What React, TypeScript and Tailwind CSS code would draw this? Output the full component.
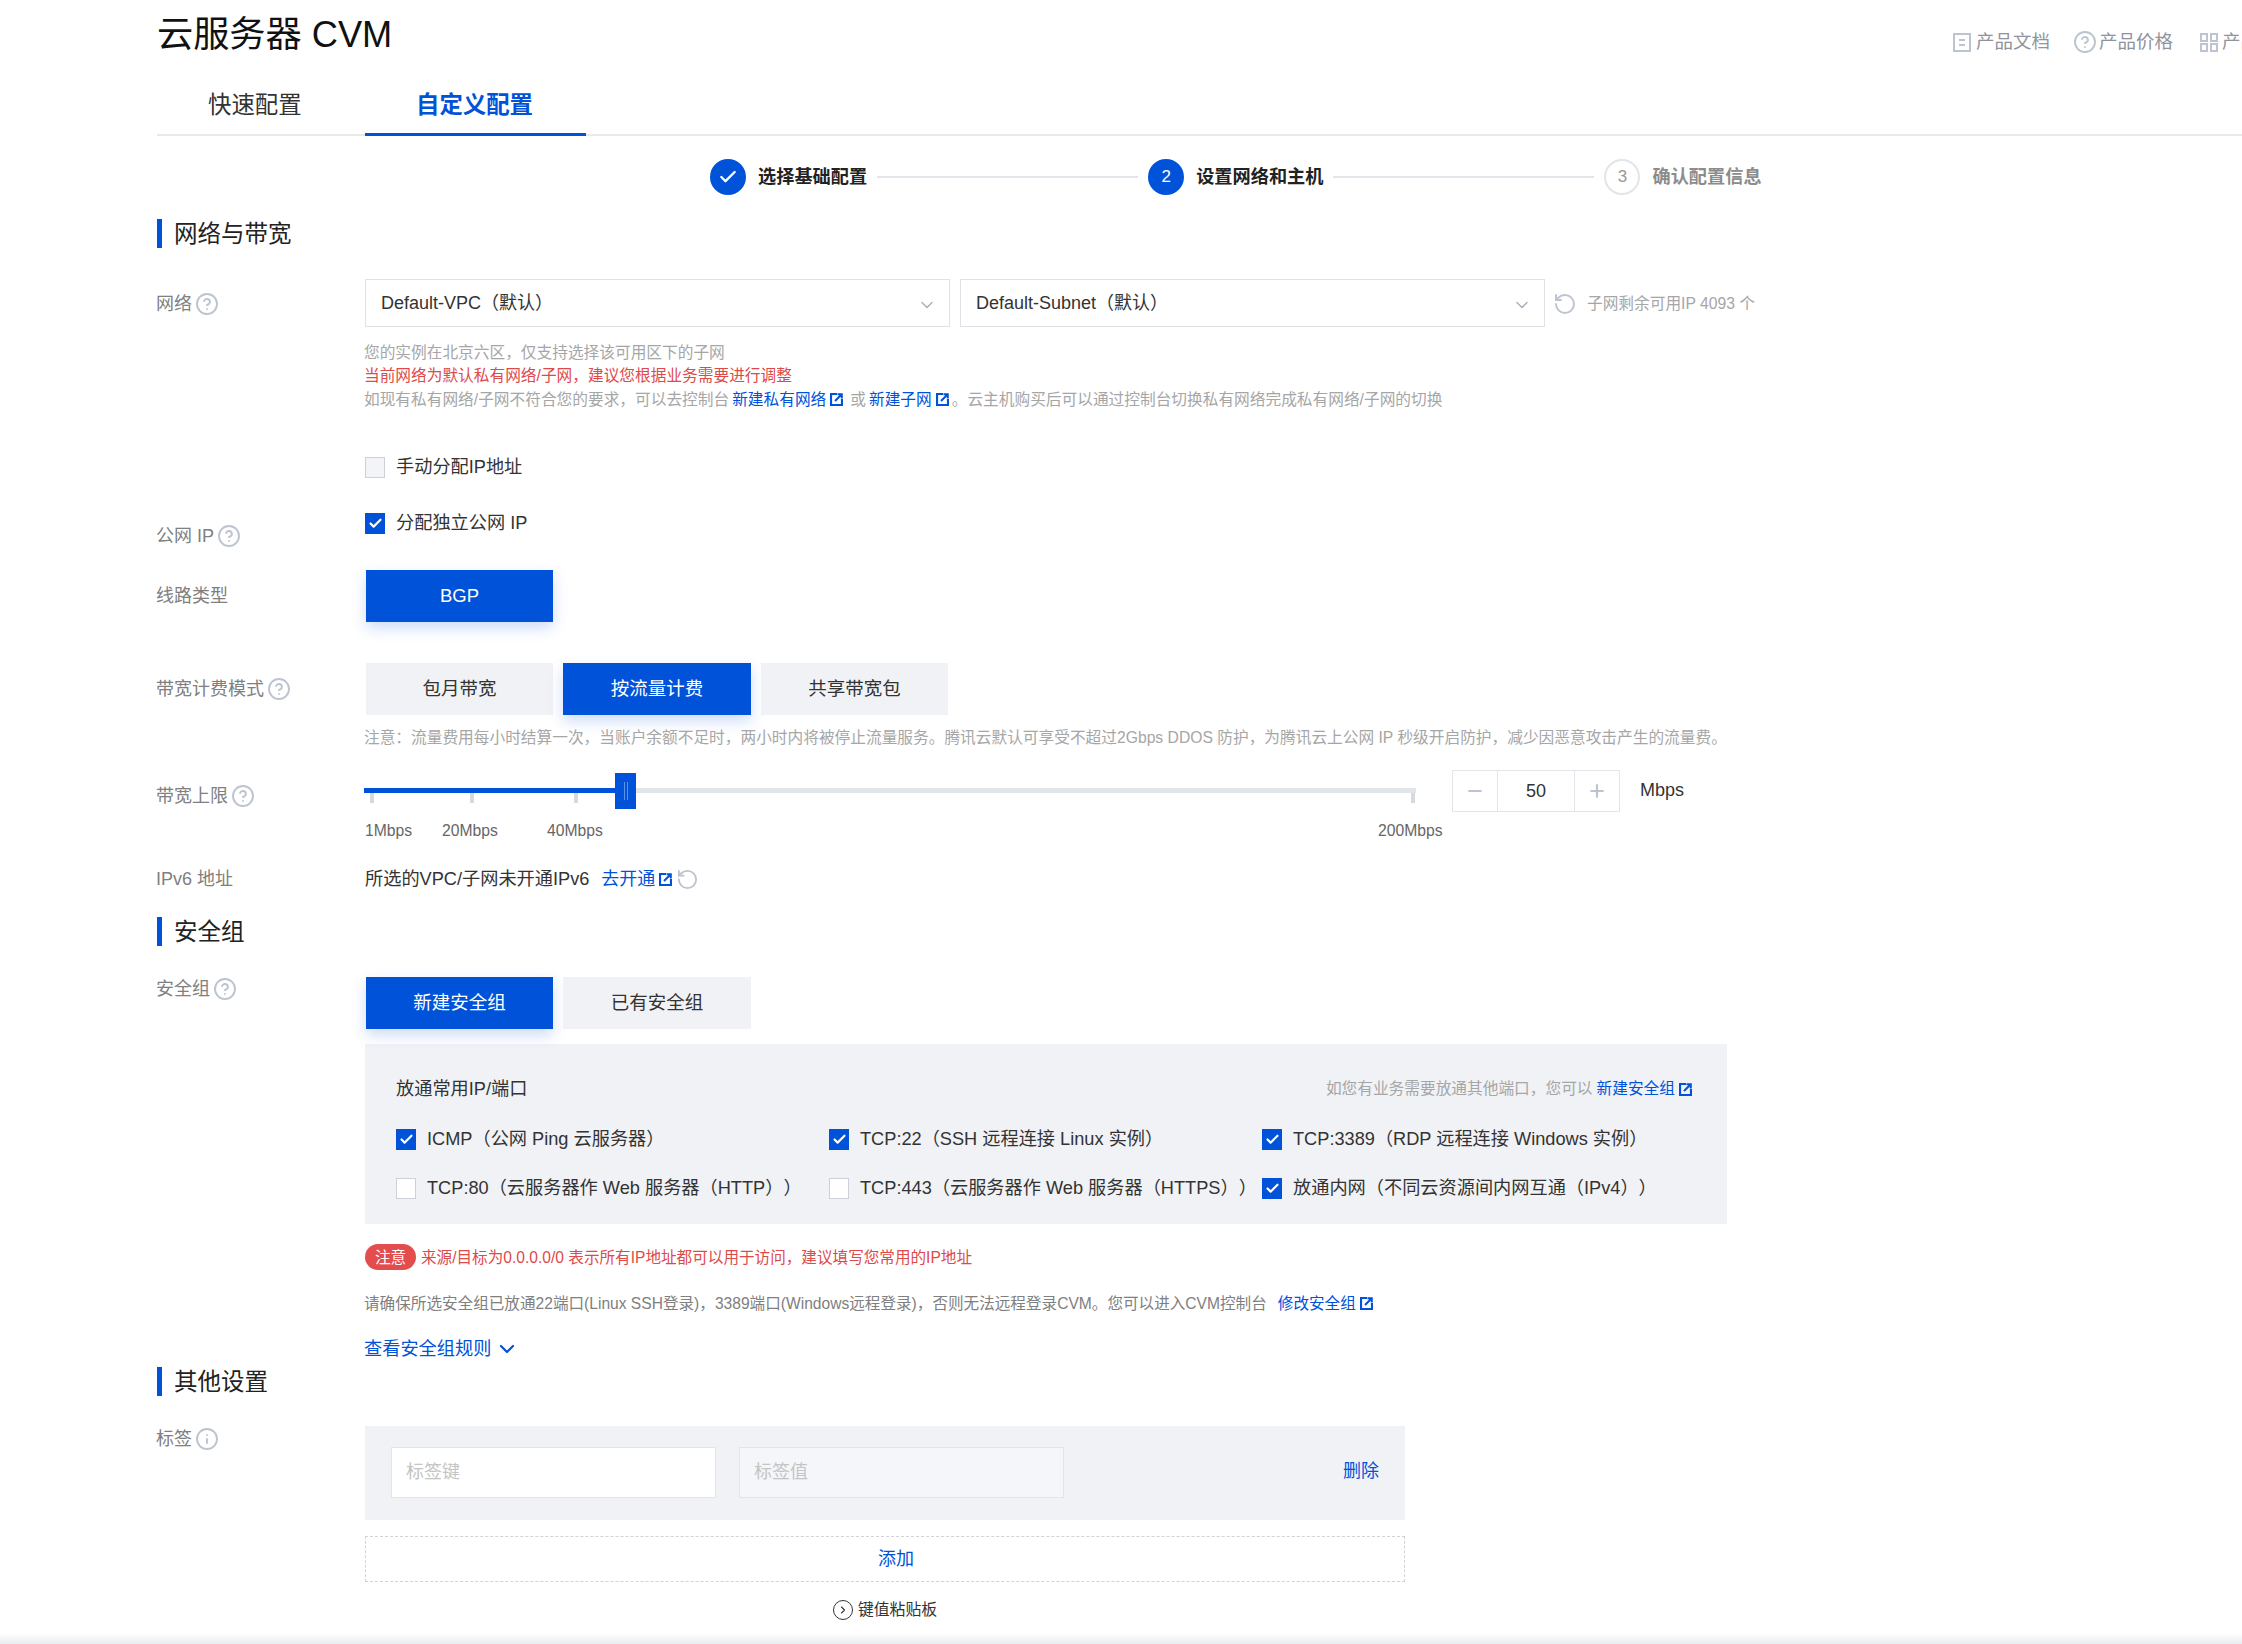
import React from "react";
import { Check, ChevronDown, ChevronRight, CircleHelp, Info, Minus, Plus, RotateCcw } from "lucide-react";

const Help = () => <CircleHelp size={24} strokeWidth={1.9} className="-my-[2px] text-[#bcc4d0] shrink-0" />;

const Ext = () => (
  <svg width="13" height="13" viewBox="0 0 13 13" className="inline-block shrink-0 ml-[4px]" fill="none">
    <path d="M7 1H1v11h11V6" stroke="#0052d9" strokeWidth="2.2" />
    <path d="M5 8l6-6M7.5 1.2h4.3v4.3" stroke="#0052d9" strokeWidth="2" />
  </svg>
);

const Heading = ({ children, className }: any) => (
  <div className={"h-[29px] border-l-[5px] border-[#0052d9] pl-[12px] pt-[2px] flex items-center text-[23.5px] text-[#222] " + className}>
    {children}
  </div>
);

const Label = ({ children, className }: any) => (
  <div className={"w-[209px] -ml-px shrink-0 flex items-center gap-[3px] text-[18px] leading-[20px] text-[#808080] " + className}>
    {children}
  </div>
);

const Checkbox = ({ on, white }: any) =>
  on ? (
    <span className="w-[20px] h-[21px] shrink-0 bg-[#0052d9] flex items-center justify-center">
      <Check size={15} strokeWidth={3.4} className="text-white" />
    </span>
  ) : (
    <span className={"w-[20px] h-[21px] shrink-0 border border-[#ccd1d9] " + (white ? "bg-white" : "bg-[#f2f4f8]")} />
  );

const Option = ({ on, children, className }: any) => (
  <button
    className={
      "h-[52px] flex items-center justify-center text-[18.5px] " +
      (on ? "bg-[#0052d9] text-white shadow-[0_6px_14px_rgba(0,82,217,0.2)] " : "bg-[#f1f2f5] text-[#333] ") +
      (className || "w-[187px]")
    }
  >
    {children}
  </button>
);

const Select = ({ text, width }: any) => (
  <div className={"h-[48px] border border-[#dfe2e6] flex items-center justify-between pl-[15px] pr-[12px] text-[18px] text-[#333] " + width}>
    <span>{text}</span>
    <ChevronDown size={20} strokeWidth={1.6} className="text-[#a5adba] mt-[3px]" />
  </div>
);

const Step = ({ mark, text, tone }: any) => (
  <div className="flex items-center gap-[12px]">
    {mark}
    <span className={"pt-[2px] text-[18.2px] font-semibold whitespace-nowrap " + tone}>{text}</span>
  </div>
);

const Port = ({ on, children }: any) => (
  <div className="flex items-center gap-[11px] text-[18.2px] leading-[21px] text-[#333] whitespace-nowrap">
    <Checkbox on={on} white />
    <span>{children}</span>
  </div>
);

const DocIcon = () => (
  <svg width="18" height="19" viewBox="0 0 18 19" fill="none" className="shrink-0">
    <rect x="1" y="1" width="16" height="17" stroke="#bcc4d0" strokeWidth="2" />
    <path d="M6 7h6M6 12h6" stroke="#bcc4d0" strokeWidth="2" />
  </svg>
);

const GridIcon = () => (
  <svg width="18" height="19" viewBox="0 0 18 19" fill="none" className="shrink-0">
    <rect x="1" y="1" width="6" height="7" stroke="#bcc4d0" strokeWidth="2" />
    <rect x="11" y="1" width="6" height="7" stroke="#bcc4d0" strokeWidth="2" />
    <rect x="1" y="11" width="6" height="7" stroke="#bcc4d0" strokeWidth="2" />
    <rect x="11" y="11" width="6" height="7" stroke="#bcc4d0" strokeWidth="2" />
  </svg>
);

export default function App() {
  return (
    <div className="relative h-[1644px] overflow-hidden bg-white pl-[157px] [text-spacing-trim:space-all] font-['Liberation_Sans','Noto_Sans_CJK_SC',sans-serif]">
      {/* header */}
      <div className="flex h-[70px] whitespace-nowrap">
        <div className="w-[1796px] shrink-0 pt-[15px] text-[36.2px] leading-[40px] text-[#111]">云服务器 CVM</div>
        <div className="flex shrink-0 items-center pt-[14px] h-[70px] text-[18.5px] text-[#8f949c]">
          <span className="flex items-center gap-[5px]"><DocIcon />产品文档</span>
          <span className="ml-[23px] flex items-center gap-[2px]"><CircleHelp size={24} strokeWidth={1.9} className="text-[#bcc4d0]" />产品价格</span>
          <span className="ml-[27px] flex items-center gap-[4px]"><GridIcon />产品咨询</span>
        </div>
      </div>

      {/* tabs */}
      <div className="flex h-[66px] border-b-2 border-[#e8e9eb]">
        <div className="w-[208px] pl-[51px] pt-[23px] text-[23.4px] leading-[24px] text-[#333]">快速配置</div>
        <div className="w-[221px] h-[66px] border-b-[3px] border-[#0052d9] pt-[23px] pr-[2px] text-center text-[23.4px] leading-[24px] font-semibold text-[#0052d9]">
          自定义配置
        </div>
      </div>

      {/* steps */}
      <div className="mt-[23px] ml-[553px] flex h-[36px] items-center">
        <Step
          tone="text-[#222]"
          text="选择基础配置"
          mark={
            <span className="flex h-[36px] w-[36px] items-center justify-center rounded-full bg-[#0052d9]">
              <Check size={20} strokeWidth={2.8} className="text-white" />
            </span>
          }
        />
        <div className="mx-[10px] h-[2px] w-[261px] bg-[#e2e5ea]" />
        <Step
          tone="text-[#222]"
          text="设置网络和主机"
          mark={<span className="flex h-[36px] w-[36px] items-center justify-center rounded-full bg-[#0052d9] text-[17px] text-white">2</span>}
        />
        <div className="mx-[10px] h-[2px] w-[261px] bg-[#e2e5ea]" />
        <Step
          tone="text-[#8c8c8c]"
          text="确认配置信息"
          mark={<span className="flex h-[36px] w-[36px] items-center justify-center rounded-full border-2 border-[#e2e5ea] text-[17px] text-[#999]">3</span>}
        />
      </div>

      {/* 网络与带宽 */}
      <Heading className="mt-[24px]">网络与带宽</Heading>

      <div className="mt-[31px] flex items-center">
        <Label className="pt-[2px]">网络<Help /></Label>
        <div className="flex items-center">
          <Select text="Default-VPC（默认）" width="w-[585px]" />
          <div className="ml-[10px]"><Select text="Default-Subnet（默认）" width="w-[585px]" /></div>
          <RotateCcw size={24} strokeWidth={1.9} className="ml-[8px] mt-[2px] text-[#bcc4d0]" />
          <span className="ml-[10px] pt-[2px] text-[15.7px] text-[#a6a6a6] whitespace-nowrap">子网剩余可用IP 4093 个</span>
        </div>
      </div>

      <div className="mt-[14px] ml-[207px] text-[15.7px] leading-[23.4px] text-[#a6a6a6]">
        <div>您的实例在北京六区，仅支持选择该可用区下的子网</div>
        <div className="text-[#dd4a4a]">当前网络为默认私有网络/子网，建议您根据业务需要进行调整</div>
        <div className="flex items-center whitespace-nowrap">
          如现有私有网络/子网不符合您的要求，可以去控制台
          <span className="ml-[3px] text-[#0052d9]">新建私有网络</span><Ext />
          <span className="ml-[7px]">或</span>
          <span className="ml-[3px] text-[#0052d9]">新建子网</span><Ext />
          <span className="ml-[3px]">。云主机购买后可以通过控制台切换私有网络完成私有网络/子网的切换</span>
        </div>
      </div>

      <div className="mt-[46px] ml-[208px] flex h-[21px] items-center gap-[11px] text-[18.2px] text-[#333]">
        <Checkbox />手动分配IP地址
      </div>

      <div className="mt-[35px] flex items-start">
        <Label className="mt-[13px]">公网 IP<Help /></Label>
        <div className="flex h-[21px] items-center gap-[11px] text-[18.2px] text-[#333]">
          <Checkbox on />分配独立公网 IP
        </div>
      </div>

      <div className="mt-[24px] flex items-center">
        <Label>线路类型</Label>
        <Option on className="ml-[1px] w-[187px]">BGP</Option>
      </div>

      <div className="mt-[41px] flex items-center">
        <Label>带宽计费模式<Help /></Label>
        <div className="ml-[1px] flex gap-[10px]">
          <Option>包月带宽</Option>
          <Option on className="w-[188px]">按流量计费</Option>
          <Option>共享带宽包</Option>
        </div>
      </div>

      <div className="mt-[11px] ml-[207px] text-[15.7px] leading-[23px] text-[#a6a6a6] whitespace-nowrap">
        注意：流量费用每小时结算一次，当账户余额不足时，两小时内将被停止流量服务。腾讯云默认可享受不超过2Gbps DDOS 防护，为腾讯云上公网 IP 秒级开启防护，减少因恶意攻击产生的流量费。
      </div>

      {/* 带宽上限 */}
      <div className="mt-[21px] flex items-start">
        <Label className="mt-[16px] !w-[208px]">带宽上限<Help /></Label>
        <div className="w-[1052px] shrink-0 pt-[18px]">
          <div className="relative h-[5px] bg-[#e2e5ea]">
            <div className="h-[5px] w-[252px] bg-[#0052d9]" />
            <div className="absolute left-[251px] top-[-15px] flex h-[36px] w-[21px] items-center justify-center gap-[2px] bg-[#0052d9]">
              <span className="h-[18px] w-px bg-[#5c8fe6]" />
              <span className="h-[18px] w-px bg-[#5c8fe6]" />
            </div>
          </div>
          <div className="flex h-[10px]">
            <span className="ml-[6px] w-[4px] bg-[#d5d9e0]" />
            <span className="ml-[96px] w-[4px] bg-[#d5d9e0]" />
            <span className="ml-[100px] w-[4px] bg-[#d5d9e0]" />
            <span className="ml-[833px] w-[4px] bg-[#d5d9e0]" />
          </div>
          <div className="mt-[17px] flex h-[22px] items-center text-[15.7px] text-[#666] whitespace-nowrap">
            <span className="ml-[1px] w-[77px] shrink-0">1Mbps</span>
            <span className="w-[105px] shrink-0">20Mbps</span>
            <span className="w-[831px] shrink-0">40Mbps</span>
            <span className="shrink-0">200Mbps</span>
          </div>
        </div>
        <div className="ml-[36px] flex h-[42px] w-[168px] shrink-0 items-center border border-[#e2e5ea] text-[18px] text-[#333]">
          <span className="flex h-full w-[45px] items-center justify-center border-r border-[#e2e5ea]">
            <Minus size={20} strokeWidth={2.6} className="text-[#bcc4d0]" />
          </span>
          <span className="flex-1 text-center">50</span>
          <span className="flex h-full w-[45px] items-center justify-center border-l border-[#e2e5ea]">
            <Plus size={20} strokeWidth={2.6} className="text-[#bcc4d0]" />
          </span>
        </div>
        <span className="ml-[20px] h-[42px] pt-[8px] text-[18px] leading-[24px] text-[#333]">Mbps</span>
      </div>

      <div className="mt-[25px] flex h-[24px] items-center">
        <Label>IPv6 地址</Label>
        <span className="text-[18.2px] text-[#333] whitespace-nowrap">所选的VPC/子网未开通IPv6</span>
        <span className="ml-[12px] text-[18px] text-[#0052d9]">去开通</span>
        <Ext />
        <RotateCcw size={23} strokeWidth={1.9} className="ml-[4px] text-[#bcc4d0]" />
      </div>

      {/* 安全组 */}
      <Heading className="mt-[26px]">安全组</Heading>

      <div className="mt-[31px] flex items-start">
        <Label className="mt-[2px]">安全组<Help /></Label>
        <div className="ml-[1px] flex gap-[10px]">
          <Option on>新建安全组</Option>
          <Option className="w-[188px]">已有安全组</Option>
        </div>
      </div>

      <div className="mt-[15px] ml-[208px] h-[180px] w-[1362px] bg-[#f0f2f6] pl-[30px] pr-[35px] pt-[33px]">
        <div className="flex h-[24px] items-center justify-between">
          <span className="ml-[1px] text-[18.2px] text-[#333]">放通常用IP/端口</span>
          <span className="flex items-center text-[15.7px] text-[#a6a6a6] whitespace-nowrap">
            如您有业务需要放通其他端口，您可以
            <span className="ml-[4px] text-[#0052d9]">新建安全组</span><Ext />
          </span>
        </div>
        <div className="mt-[28px] ml-[1px] grid grid-cols-[433px_433px_433px] gap-y-[28px]">
          <Port on>ICMP（公网 Ping 云服务器）</Port>
          <Port on>TCP:22（SSH 远程连接 Linux 实例）</Port>
          <Port on>TCP:3389（RDP 远程连接 Windows 实例）</Port>
          <Port>TCP:80（云服务器作 Web 服务器（HTTP））</Port>
          <Port>TCP:443（云服务器作 Web 服务器（HTTPS））</Port>
          <Port on>放通内网（不同云资源间内网互通（IPv4））</Port>
        </div>
      </div>

      <div className="mt-[20px] ml-[208px] flex h-[26px] items-center text-[15.6px] text-[#dd4a4a] whitespace-nowrap">
        <span className="flex h-[26px] w-[51px] items-center justify-center rounded-full bg-[#e34d4d] text-white">注意</span>
        <span className="ml-[5px]">来源/目标为0.0.0.0/0 表示所有IP地址都可以用于访问，建议填写您常用的IP地址</span>
      </div>

      <div className="mt-[21px] ml-[207px] flex h-[24px] items-center text-[15.6px] text-[#808080] whitespace-nowrap">
        请确保所选安全组已放通22端口(Linux SSH登录)，3389端口(Windows远程登录)，否则无法远程登录CVM。您可以进入CVM控制台
        <span className="ml-[11px] text-[#0052d9]">修改安全组</span><Ext />
      </div>

      <div className="mt-[22px] ml-[207px] flex h-[24px] items-center text-[18.2px] text-[#0052d9]">
        查看安全组规则
        <ChevronDown size={24} strokeWidth={2.2} className="ml-[4px]" />
      </div>

      {/* 其他设置 */}
      <Heading className="mt-[6px]">其他设置</Heading>

      <div className="mt-[30px] flex items-start">
        <Label className="mt-[3px]">标签<Info size={24} strokeWidth={1.9} className="-my-[2px] text-[#bcc4d0]" /></Label>
        <div className="flex h-[94px] w-[1040px] bg-[#f0f2f6] pl-[26px] pr-[26px] pt-[21px]">
          <div className="flex h-[51px] w-[325px] items-center border border-[#e2e5ea] bg-white pl-[14px] text-[18px] text-[#c4c4c4]">标签键</div>
          <div className="ml-[23px] flex h-[51px] w-[325px] items-center border border-[#e2e5ea] bg-[#f5f6fa] pl-[14px] text-[18px] text-[#c4c4c4]">标签值</div>
          <span className="ml-auto pt-[12px] text-[18px] leading-[24px] text-[#0052d9]">删除</span>
        </div>
      </div>

      <div className="mt-[16px] ml-[208px] flex h-[46px] w-[1040px] items-center justify-center border border-dashed border-[#d0d3d8] pl-[22px] text-[18px] text-[#0052d9]">
        添加
      </div>

      <div className="mt-[16px] ml-[208px] flex h-[24px] w-[1040px] items-center justify-center gap-[5px] text-[15.8px] text-[#333]">
        <span className="flex h-[20px] w-[20px] items-center justify-center rounded-full border-[1.5px] border-[#333]">
          <ChevronRight size={12} strokeWidth={2.2} />
        </span>
        键值粘贴板
      </div>

      <div className="absolute bottom-0 left-0 right-0 h-[11px] bg-gradient-to-b from-white to-[#e9ecf0]" />
    </div>
  );
}
